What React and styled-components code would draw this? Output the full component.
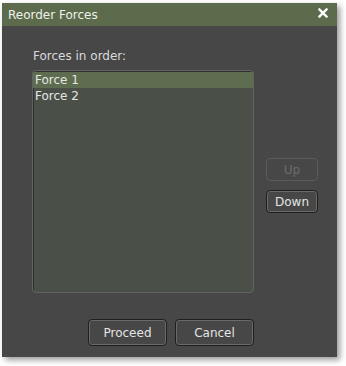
import React from 'react';
import styled, { createGlobalStyle } from 'styled-components';

const Global = createGlobalStyle`
  html, body { margin: 0; padding: 0; background: #ffffff; }
  body { font-family: "DejaVu Sans", Verdana, sans-serif; }
`

const Page = styled.div`
  width: 346px;
  height: 366px;
  padding: 3px 0 0 2px;
  box-sizing: border-box;
`

const Dialog = styled.div`
  width: 335px;
  height: 354px;
  background: #474747;
  display: flex;
  flex-direction: column;
  box-shadow: 3px 3px 6px rgba(0, 0, 0, 0.4);
`

const TitleBar = styled.div`
  height: 23px;
  background: #5c6b4c;
  display: flex;
  align-items: center;
  justify-content: space-between;
  padding: 0 9px 0 6px;
  color: #eef0ea;
  font-size: 12px;
`

const CloseIcon = styled.svg`
  width: 10px;
  height: 10px;
  margin-top: -4px;
`

const Body = styled.div`
  flex: 1;
  display: flex;
  flex-direction: column;
  padding: 22px 0 0 30px;
`

const Label = styled.div`
  color: #dadada;
  font-size: 12px;
  height: 22px;
  line-height: 16px;
  margin-left: 1px;
`

const Middle = styled.div`
  display: flex;
  gap: 12px;
`

const List = styled.div`
  width: 222px;
  height: 223px;
  background: #4a5048;
  border: 1px solid #626262;
  border-radius: 4px;
  box-shadow: inset 1px 1px 0 #2f2f2f;
  padding-top: 1px;
  box-sizing: border-box;
`

const Row = styled.div`
  height: 16px;
  line-height: 16px;
  padding-left: 2px;
  font-size: 12px;
  color: #e6e6e6;
  background: ${p => (p.selected ? '#5e6d4f' : 'transparent')};
`

const Side = styled.div`
  display: flex;
  flex-direction: column;
  gap: 9px;
  padding-top: 88px;
`

const Btn = styled.button`
  width: ${p => p.w}px;
  height: ${p => p.h}px;
  background: #474747;
  border: 1px solid ${p => (p.disabled ? '#5b5b5b' : '#1f1f1f')};
  box-shadow: ${p => (p.disabled ? 'none' : 'inset 0 0 0 1px #6a6a6a')};
  border-radius: 4px;
  color: ${p => (p.disabled ? '#6c6c6c' : '#e4e4e4')};
  font-family: "DejaVu Sans", Verdana, sans-serif;
  font-size: 12px;
  padding: 0;
  cursor: default;
`

const Footer = styled.div`
  display: flex;
  gap: 8px;
  padding: 26px 0 0 56px;
`

export default function App() {
  return (
    <Page>
      <Global />
      <Dialog>
        <TitleBar>
          <span>Reorder Forces</span>
          <CloseIcon viewBox="0 0 10 10">
            <path d="M1.5 1.5 L8.5 8.5 M8.5 1.5 L1.5 8.5" stroke="#ffffff" strokeWidth="2.4" strokeLinecap="square" />
          </CloseIcon>
        </TitleBar>
        <Body>
          <Label>Forces in order:</Label>
          <Middle>
            <List>
              <Row selected>Force 1</Row>
              <Row>Force 2</Row>
            </List>
            <Side>
              <Btn w={52} h={23} disabled>Up</Btn>
              <Btn w={52} h={23}>Down</Btn>
            </Side>
          </Middle>
          <Footer>
            <Btn w={79} h={27}>Proceed</Btn>
            <Btn w={79} h={27}>Cancel</Btn>
          </Footer>
        </Body>
      </Dialog>
    </Page>
  );
}
